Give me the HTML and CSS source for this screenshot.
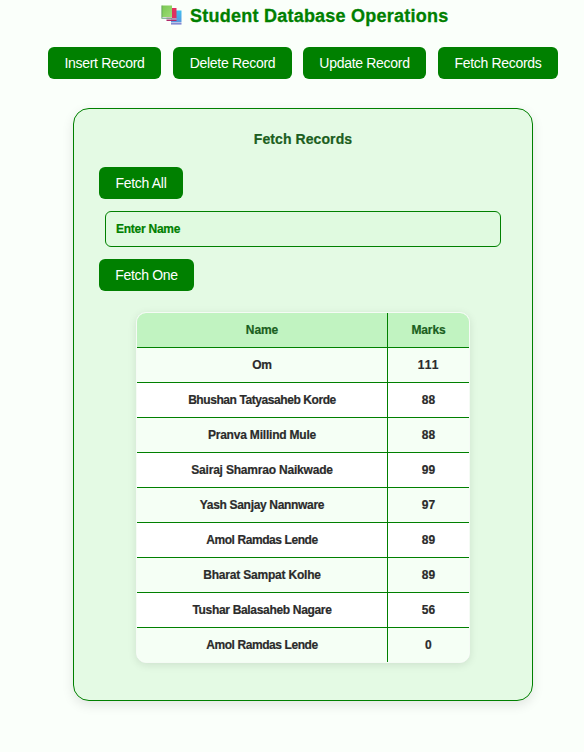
FILE: index.html
```html
<!DOCTYPE html>
<html lang="en">
<head>
<meta charset="utf-8">
<title>Student Database Operations</title>
<link rel="stylesheet" href="styles.css">
</head>
<body>
<header class="title">
  <svg class="books" viewBox="0 0 21 20" aria-hidden="true">
    <defs>
      <linearGradient id="g" x1="0" y1="0" x2="1" y2="1"><stop offset="0" stop-color="#78c850"/><stop offset="1" stop-color="#a0dc78"/></linearGradient>
      <linearGradient id="b" x1="0" y1="0" x2="0" y2="1"><stop offset="0" stop-color="#40c0f0"/><stop offset="1" stop-color="#5898e0"/></linearGradient>
    </defs>
    <path d="M10 5.500h10.500v11.500H10z" fill="url(#b)"/>
    <path d="M10 17h10.500v1.200H10z" fill="#b8c4e8"/>
    <path d="M10 18.200h10.500v1.300H10z" fill="#6870c8"/>
    <path d="M5.500 3h10v10.500h-10z" fill="#e03060"/>
    <path d="M5.500 13.500h10v1.200h-10z" fill="#d8b8c8"/>
    <path d="M5.500 14.700h10V16h-10z" fill="#b02868"/>
    <path d="M.8.500H11v11.700H.8z" fill="url(#g)"/>
    <path d="M.8 12.200H11v1H.8z" fill="#c8d4d8"/>
    <path d="M.8 13.200H11v.9H1.500z" fill="#6c9c88"/>
    <path d="M.5.500h.8v13.300H.5z" fill="#5c9a5c"/>
  </svg>
  <h1>Student Database Operations</h1>
</header>
<nav class="actions">
  <button class="btn insert">Insert Record</button>
  <button class="btn delete">Delete Record</button>
  <button class="btn update">Update Record</button>
  <button class="btn fetch">Fetch Records</button>
</nav>
<main class="card">
  <h2>Fetch Records</h2>
  <button class="btn all">Fetch All</button>
  <input class="name" type="text" placeholder="Enter Name">
  <button class="btn one">Fetch One</button>
  <div class="records">
    <table>
      <thead><tr><th>Name</th><th>Marks</th></tr></thead>
      <tbody>
        <tr><td>Om</td><td class="wide">111</td></tr>
        <tr><td class="tight">Bhushan Tatyasaheb Korde</td><td>88</td></tr>
        <tr><td class="loose">Pranva Millind Mule</td><td>88</td></tr>
        <tr><td class="loose">Sairaj Shamrao Naikwade</td><td>99</td></tr>
        <tr><td>Yash Sanjay Nannware</td><td>97</td></tr>
        <tr><td class="tight">Amol Ramdas Lende</td><td>89</td></tr>
        <tr><td class="loose">Bharat Sampat Kolhe</td><td>89</td></tr>
        <tr><td>Tushar Balasaheb Nagare</td><td>56</td></tr>
        <tr><td class="tight">Amol Ramdas Lende</td><td>0</td></tr>
      </tbody>
    </table>
  </div>
</main>
</body>
</html>
```
FILE: styles.css
```css
* { box-sizing: border-box; }
body {
  margin: 0;
  height: 752px;
  overflow: hidden;
  background: #fafffa;
  color: #2b2b2b;
  font-family: "Franklin Gothic Medium", "Liberation Sans", Arial, sans-serif;
}
.title {
  display: flex;
  height: 47px;
  padding: 5px 0 0 161px;
}
.books { width: 21px; height: 20px; margin-right: 8px; }
h1 {
  margin: 0;
  font-size: 18px;
  line-height: 22px;
  color: green;
  white-space: nowrap;
  letter-spacing: 0.24px;
  -webkit-text-stroke: 0.3px green;
}
.actions { display: flex; gap: 12px; padding-left: 48px; }
.btn {
  display: block;
  height: 32px;
  padding: 0;
  border: 0;
  border-radius: 6px;
  background: green;
  color: #fff;
  font: 14px "Liberation Sans", Arial, sans-serif;
  letter-spacing: -0.3px;
  white-space: nowrap;
}
.insert { width: 113px; }
.delete { width: 119px; }
.update { width: 123px; margin-left: -1px; }
.fetch { width: 120px; }
.card {
  width: 460px;
  height: 593px;
  margin: 29px 0 0 73px;
  padding: 20px 25px;
  border: 1px solid green;
  border-radius: 16px;
  background: #e4fae4;
  box-shadow: 0 4px 12px rgba(0, 0, 0, 0.1);
}
h2 {
  margin: 0 0 18px;
  font-size: 14px;
  line-height: 20px;
  text-align: center;
  letter-spacing: 0.08px;
  color: #1b5e20;
  -webkit-text-stroke: 0.2px #1b5e20;
}
.all { width: 84px; padding-bottom: 1px; }
.one { width: 95px; }
.name {
  display: block;
  width: 396px;
  height: 36px;
  margin: 12px 6px;
  padding: 0 10px;
  border: 1px solid green;
  border-radius: 6px;
  background: #e0fae0;
  font: bold 12px "Franklin Gothic Medium", "Liberation Sans", Arial, sans-serif;
  letter-spacing: -0.25px;
}
.name::placeholder { color: green; opacity: 1; -webkit-text-stroke: 0.2px green; }
.records {
  width: 334px;
  margin: 21px auto 0;
  border: 1px solid #f5fbf5;
  border-radius: 10px;
  overflow: hidden;
  background: #fff;
  box-shadow: 0 2px 8px rgba(0, 0, 0, 0.1);
}
table { width: 332px; table-layout: fixed; border-collapse: separate; border-spacing: 0; }
th, td {
  height: 35px;
  padding: 0;
  border-bottom: 1px solid green;
  text-align: center;
  font-size: 12px;
  font-weight: bold;
  letter-spacing: 0.2px;
  -webkit-text-stroke: 0.2px currentColor;
}
th { background: #c1f3c1; color: #1b5e20; letter-spacing: -0.1px; }
th:first-child, td:first-child { width: 251px; border-right: 1px solid green; }
td:first-child { letter-spacing: -0.32px; }
td:first-child.tight { letter-spacing: -0.42px; }
td:first-child.loose { letter-spacing: -0.2px; }
.wide { letter-spacing: 1px; }
tbody tr:nth-child(odd) { background: #f5fff5; }
tbody tr:last-child td { height: 34px; border-bottom: 0; }
```
